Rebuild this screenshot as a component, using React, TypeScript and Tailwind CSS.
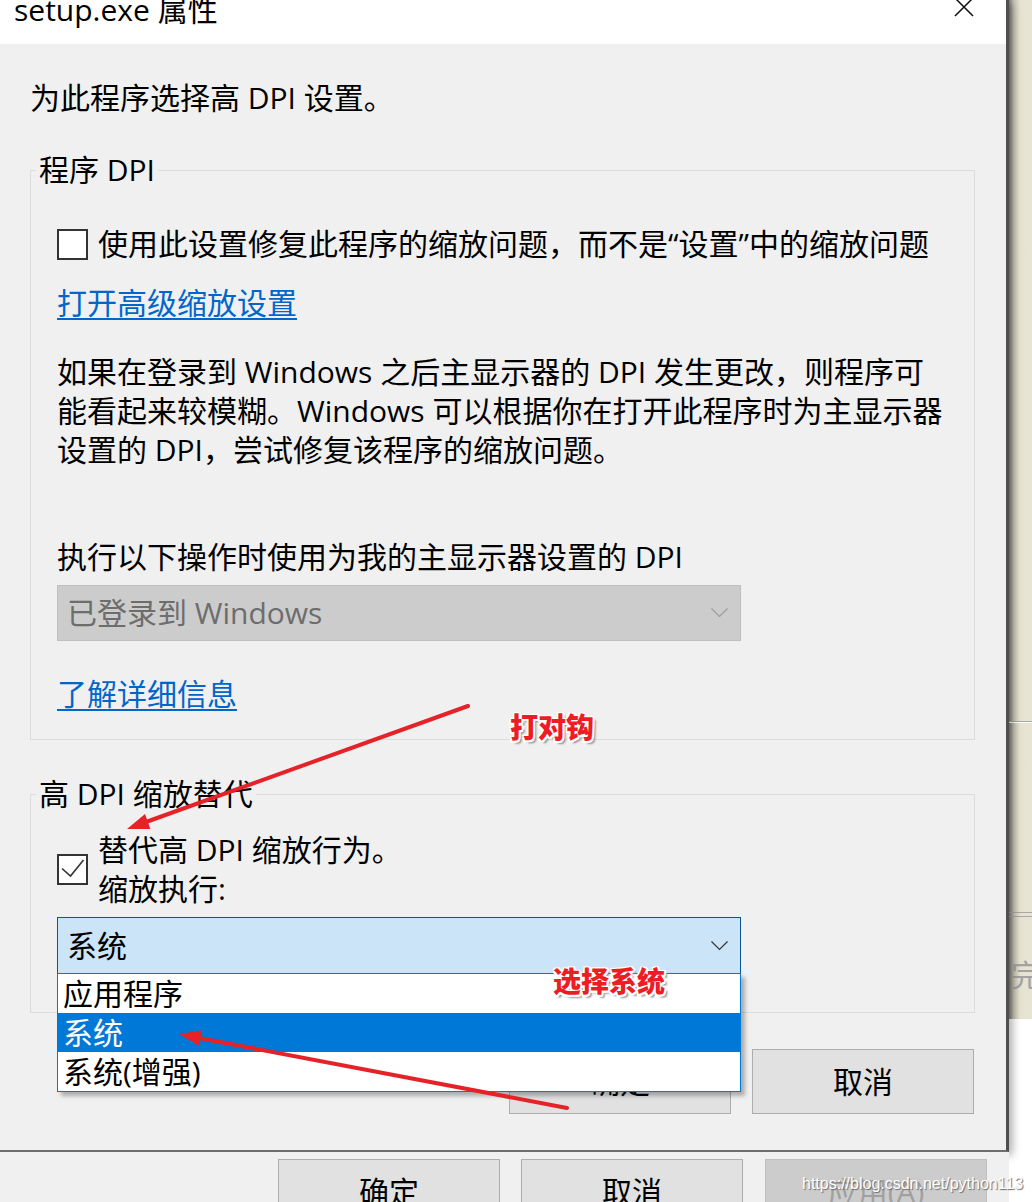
import React from 'react';

const Chevron = ({ color }: { color: string }) => (
  <svg width="17" height="10" viewBox="0 0 17 10" fill="none">
    <path d="M0.5 0.5 L8.5 8.5 L16.5 0.5" stroke={color} strokeWidth="1.2" />
  </svg>
);

const Checkbox = ({ checked }: { checked?: boolean }) => (
  <div className="w-[31px] h-[31px] shrink-0 border-2 border-[#333333] bg-white">
    {checked && (
      <svg width="27" height="27" viewBox="0 0 27 27">
        <path d="M3 12.5 L11.5 20 L24.5 4" fill="none" stroke="#333" strokeWidth="1.6" />
      </svg>
    )}
  </div>
);

const Group = ({ title, className, children }: { title: string; className?: string; children: React.ReactNode }) => (
  <fieldset className={`min-w-0 border border-[#dcdcdc] ${className ?? ''}`}>
    <legend className="ml-[5px] px-[3px] leading-[40px]">{title}</legend>
    {children}
  </fieldset>
);

const Button = ({ label, disabled }: { label: string; disabled?: boolean }) => (
  <div
    className={`w-[222px] h-[65px] shrink-0 flex items-center justify-center border ${
      disabled ? 'bg-[#cccccc] border-[#bfbfbf] text-[#a0a0a0]' : 'bg-[#e1e1e1] border-[#adadad] text-black'
    }`}
  >
    {label}
  </div>
);

const outline =
  '[text-shadow:-1.5px_-1.5px_0_#fff,1.5px_-1.5px_0_#fff,-1.5px_1.5px_0_#fff,1.5px_1.5px_0_#fff,0_2px_0_#fff,2px_0_0_#fff,3px_3px_2px_#8a8a8a]';

export default function App() {
  return (
    <div className="relative w-[1032px] h-[1202px] overflow-hidden flex bg-white text-[30px] text-black font-['Open_Sans','Noto_Sans_CJK_SC',sans-serif]">
      {/* left column: dialog + parent dialog buttons */}
      <div className="relative z-10 w-[1009px] shrink-0 flex flex-col">
        <div className="h-[1152px] shrink-0 flex flex-col bg-[#f0f0f0] border-r-[3px] border-b-2 border-r-[#4f4f4f] border-b-[#6d6d6d] shadow-[3px_3px_9px_rgba(0,0,0,0.35)] overflow-hidden">
          {/* title bar */}
          <div className="h-[44px] shrink-0 bg-white flex items-start justify-between pl-[14px] pr-[32px]">
            <span className="-mt-[10px] leading-[40px] whitespace-nowrap">setup.exe 属性</span>
            <svg width="20" height="20" viewBox="0 0 20 20" className="-mt-[3px]">
              <path d="M1 1 L19 19 M19 1 L1 19" stroke="#111" strokeWidth="1.5" />
            </svg>
          </div>

          {/* body */}
          <div className="flex-1 pl-[30px] pr-[31px]">
            <p className="mt-[34px] leading-[40px]">为此程序选择高 DPI 设置。</p>

            <Group title="程序 DPI" className="mt-[32px]">
              <div className="px-[26px] pb-[25px]">
                <div className="mt-[34px] h-[40px] flex items-center gap-[10px]">
                  <Checkbox />
                  <span className="leading-[40px] whitespace-nowrap">
                    使用此设置修复此程序的缩放问题，而不是“设置”中的缩放问题
                  </span>
                </div>
                <a className="mt-[19px] block w-fit leading-[40px] text-[#0066cc] underline decoration-[1.5px] underline-offset-[4px]">
                  打开高级缩放设置
                </a>
                <p className="mt-[29px] leading-[39px] whitespace-nowrap">
                  如果在登录到 Windows 之后主显示器的 DPI 发生更改，则程序可
                  <br />
                  能看起来较模糊。Windows 可以根据你在打开此程序时为主显示器
                  <br />
                  设置的 DPI，尝试修复该程序的缩放问题。
                </p>
                <p className="mt-[68px] leading-[40px] whitespace-nowrap">执行以下操作时使用为我的主显示器设置的 DPI</p>
                <div className="mt-[8px] w-[684px] h-[56px] flex items-center justify-between pl-[9px] pr-[12px] bg-[#cccccc] border border-[#bfbfbf] text-[#6d6d6d]">
                  <span className="leading-[40px]">已登录到 Windows</span>
                  <Chevron color="#9c9c9c" />
                </div>
                <a className="mt-[33px] block w-fit leading-[40px] text-[#0066cc] underline decoration-[1.5px] underline-offset-[4px]">
                  了解详细信息
                </a>
              </div>
            </Group>

            <Group title="高 DPI 缩放替代" className="mt-[34px]">
              <div className="px-[26px] pb-[38px]">
                <div className="mt-[16px] flex items-center gap-[10px]">
                  <Checkbox checked />
                  <div className="leading-[39px] whitespace-nowrap">
                    <div>替代高 DPI 缩放行为。</div>
                    <div>缩放执行:</div>
                  </div>
                </div>
                <div className="relative mt-[9px] w-[684px] h-[57px] flex items-center justify-between pl-[9px] pr-[12px] bg-[#cce4f7] border border-[#0a5499]">
                  <span className="leading-[40px]">系统</span>
                  <Chevron color="#333333" />
                  <div className="absolute -left-px top-full z-10 w-[684px] bg-white border border-[#0078d7] shadow-[4px_4px_4px_rgba(0,0,0,0.28)]">
                    <div className="h-[39px] leading-[39px] pl-[5px]">应用程序</div>
                    <div className="h-[39px] leading-[39px] pl-[5px] bg-[#0078d7] text-white">系统</div>
                    <div className="h-[39px] leading-[39px] pl-[5px]">系统(增强)</div>
                  </div>
                </div>
              </div>
            </Group>

            <div className="mt-[36px] flex justify-end gap-[21px] pr-[1px]">
              <Button label="确定" />
              <Button label="取消" />
            </div>
          </div>
        </div>

        {/* parent dialog button row */}
        <div className="flex-1 flex items-start pt-[7px] pl-[278px] bg-[#f0f0f0]">
          <Button label="确定" />
          <div className="ml-[21px]">
            <Button label="取消" />
          </div>
          <div className="ml-[22px]">
            <Button label="应用(A)" disabled />
          </div>
        </div>
      </div>

      {/* window behind, right edge */}
      <div className="flex-1 flex flex-col">
        <div className="h-[1019px] shrink-0 flex flex-col overflow-hidden bg-[linear-gradient(90deg,#85847c_0px,#c9c5b6_5px,#e7e3d3_11px,#ebe7d8_100%)]">
          <div className="h-[721px] shrink-0" />
          <div className="h-px bg-[#a9a9a3]" />
          <div className="h-px bg-white" />
          <div className="h-[189px] shrink-0" />
          <div className="h-px bg-[#a9a9a3]" />
          <div className="h-[3px] shrink-0" />
          <div className="h-px bg-[#a9a9a3]" />
          <div className="pl-[2px] pt-[38px] leading-[40px] text-[#a3a3a3] whitespace-nowrap">完成</div>
        </div>
        <div className="flex-1 bg-white" />
      </div>

      {/* annotations */}
      <svg className="absolute inset-0 z-20 pointer-events-none" width="1032" height="1202" viewBox="0 0 1032 1202">
        <line x1="468" y1="706" x2="146" y2="822" stroke="#e52228" strokeWidth="4" strokeLinecap="round" />
        <polygon points="127,829 150.4,829.1 145,814" fill="#e52228" />
        <line x1="567" y1="1108" x2="199" y2="1038" stroke="#e52228" strokeWidth="4" strokeLinecap="round" />
        <polygon points="179,1034 202.1,1030.2 199.1,1046" fill="#e52228" />
      </svg>
      <div className={`absolute z-20 left-[510px] top-[710px] text-[28px] leading-[32px] font-black text-[#ee1c25] font-['Noto_Sans_CJK_SC',sans-serif] ${outline}`}>
        打对钩
      </div>
      <div className={`absolute z-20 left-[553px] top-[964px] text-[28px] leading-[32px] font-black text-[#ee1c25] font-['Noto_Sans_CJK_SC',sans-serif] ${outline}`}>
        选择系统
      </div>
      <div className="absolute z-20 left-[802px] top-[1174px] text-[16px] leading-[20px] text-white font-['Liberation_Sans',sans-serif] [text-shadow:1px_1px_1px_#6a6a6a]">
        https://blog.csdn.net/python113
      </div>
    </div>
  );
}
